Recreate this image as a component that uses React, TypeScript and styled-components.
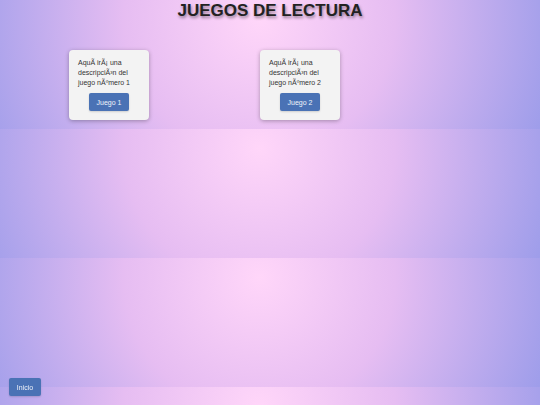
import styled, { createGlobalStyle } from "styled-components";

const GlobalStyle = createGlobalStyle`
  html {
    background: radial-gradient(circle at 48% 15%, #ffd6f9 0%, #e6bdf2 45%, #9e9dea 100%);
    background-size: 100% 129px;
    background-repeat: repeat;
    min-height: 100%;
  }

  body {
    margin: 0;
    font-family: "Liberation Sans", Arial, sans-serif;
  }
`;

const juegos = [
  { id: 1, texto: "Aqu\u00C3\u00AD ir\u00C3\u00A1 una descripci\u00C3\u00B3n del juego n\u00C3\u00BAmero 1" },
  { id: 2, texto: "Aqu\u00C3\u00AD ir\u00C3\u00A1 una descripci\u00C3\u00B3n del juego n\u00C3\u00BAmero 2" },
];

const App = () => {
  return (
    <Main>
      <GlobalStyle />
      <h1>JUEGOS DE LECTURA</h1>
      <div className="games">
        {juegos.map((juego) => (
          <Card key={juego.id}>
            <p>{juego.texto}</p>
            <Button>Juego {juego.id}</Button>
          </Card>
        ))}
      </div>
      <HomeButton>Inicio</HomeButton>
    </Main>
  );
};

const Main = styled.div`
  display: flex;
  flex-direction: column;

  width: 100%;

  h1 {
    margin: 0;
    text-align: center;
    font-size: 17px;
    line-height: 21px;
    font-weight: 700;
    color: #222;
    text-shadow: 1px 2px 3px rgba(0, 0, 0, 0.4);
  }

  .games {
    display: grid;
    grid-template-columns: repeat(2, 80px);
    gap: 111px;

    padding: 29px 0 9px 69px;
  }
`;

const Card = styled.div`
  display: flex;
  flex-direction: column;
  align-items: center;

  height: 70px;
  box-sizing: border-box;
  padding: 8px 9px 9px;

  background: #f3f3f3;
  border-radius: 4px;
  box-shadow: 0 1px 4px rgba(0, 0, 0, 0.3);

  p {
    align-self: stretch;
    margin: 0 0 5px;
    font-size: 7px;
    line-height: 10px;
    color: #333;
  }
`;

const Button = styled.button`
  width: 40px;
  height: 18px;
  padding: 0;

  border: none;
  border-radius: 2px;
  background: #4a72b5;
  color: #eef2fa;

  font-family: "Liberation Sans", Arial, sans-serif;
  font-size: 7px;
  box-shadow: 0 1px 2px rgba(0, 0, 0, 0.15);
`;

const HomeButton = styled(Button)`
  position: fixed;
  left: 9px;
  bottom: 9px;
  width: 32px;
`;

export default App;
